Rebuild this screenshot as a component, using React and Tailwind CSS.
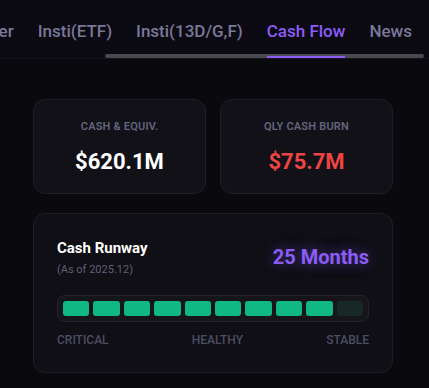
import { useState } from 'react'

const tabs = ['Holder', 'Insti(ETF)', 'Insti(13D/G,F)', 'Cash Flow', 'News']

function StatCard({ label, value, valueClass }) {
  return (
    <div className="flex-1 h-[95px] rounded-xl border border-[#1e1e27] bg-[#111117] flex flex-col items-center pt-[19px]">
      <p className="text-[11px] font-semibold tracking-[0.2px] text-[#65657f] uppercase">{label}</p>
      <p className={`mt-[12px] text-[22px] leading-[28px] font-bold ${valueClass}`}>{value}</p>
    </div>
  )
}

function App() {
  const [active, setActive] = useState('Cash Flow')
  const filled = 9

  return (
    <div className="w-[429px] h-[388px] overflow-hidden bg-[#09090e]" style={{ fontFamily: 'Roboto, "Noto Sans", sans-serif' }}>
      <div className="relative h-[59px] bg-[#0b0a12] border-b border-[#15151d] overflow-hidden">
        <div className="flex gap-6 -ml-[37px] pt-[20px]">
          {tabs.map((t) => (
            <button
              key={t}
              onClick={() => setActive(t)}
              className={`relative shrink-0 text-[17px] leading-[22px] font-medium pb-[17px] ${
                active === t ? 'text-[#8b5cf6]' : 'text-[#7a7898]'
              }`}
            >
              {t}
              {active === t && <span className="absolute left-0 right-0 bottom-0 h-[3px] bg-[#8b5cf6] z-10" />}
            </button>
          ))}
        </div>
        <div className="absolute left-[105px] w-[319px] bottom-0 h-[4px] rounded-full bg-[#48484e]" />
      </div>

      <div className="ml-[33px] w-[360px] mt-[40px] flex gap-[14px]">
        <StatCard label="Cash & Equiv." value="$620.1M" valueClass="text-white" />
        <StatCard label="QLY Cash Burn" value="$75.7M" valueClass="text-[#ef4444]" />
      </div>

      <div className="ml-[33px] w-[360px] mt-[19px] h-[160px] rounded-xl border border-[#1e1e27] bg-[#0f0f15] px-[23px] pt-[24px]">
        <div className="flex items-start justify-between">
          <div>
            <p className="text-[15px] leading-[20px] font-bold text-white">Cash Runway</p>
            <p className="mt-[5px] text-[11px] leading-[14px] text-[#5f5f74]">(As of 2025.12)</p>
          </div>
          <p className="mt-[6px] text-[20px] leading-[26px] font-bold text-[#8b5cf6] [text-shadow:0_0_14px_rgba(139,92,246,0.55)]">
            25 Months
          </p>
        </div>

        <div className="mt-[18px] h-[27px] rounded-lg border border-[#24242d] bg-[#15151b] p-[5px] flex gap-[4px]">
          {Array.from({ length: 10 }).map((_, i) => (
            <div
              key={i}
              className={`flex-1 rounded-[3px] ${i < filled ? 'bg-[#10b981]' : 'bg-[#182925]'}`}
            />
          ))}
        </div>

        <div className="mt-[11px] flex justify-between text-[12px] leading-[15px] font-medium text-[#4d4d62]">
          <span>CRITICAL</span>
          <span>HEALTHY</span>
          <span>STABLE</span>
        </div>
      </div>
    </div>
  )
}

export default App
